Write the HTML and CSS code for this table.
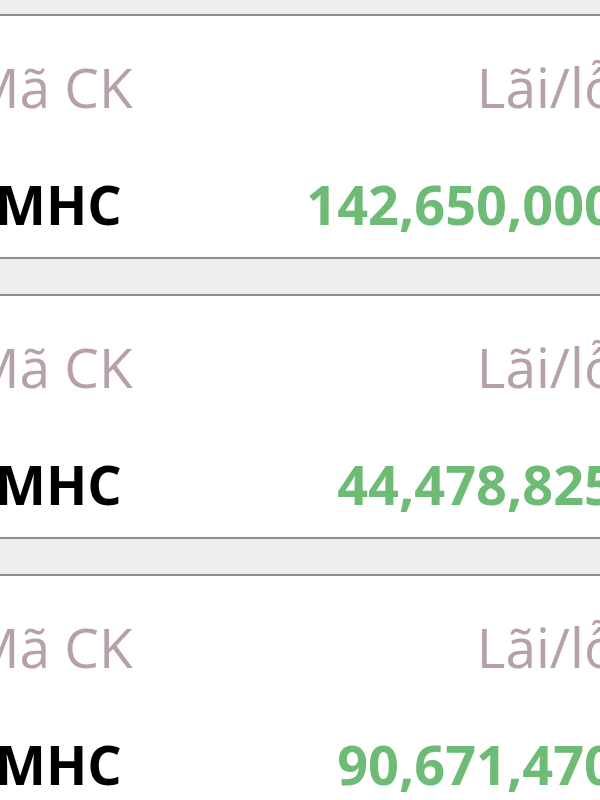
FILE: index.html
```html
<!DOCTYPE html>
<html lang="vi">
<head>
<meta charset="utf-8">
<link rel="stylesheet" href="styles.css">
</head>
<body>
<div class="list">
  <div class="gap gap-top"></div>
  <div class="card">
    <div class="row labels"><span>Mã CK</span><span>Lãi/lỗ</span></div>
    <div class="row values"><span class="code">MHC</span><span class="pl">142,650,000</span></div>
  </div>
  <div class="gap"></div>
  <div class="card">
    <div class="row labels"><span>Mã CK</span><span>Lãi/lỗ</span></div>
    <div class="row values"><span class="code">MHC</span><span class="pl">44,478,825</span></div>
  </div>
  <div class="gap"></div>
  <div class="card">
    <div class="row labels"><span>Mã CK</span><span>Lãi/lỗ</span></div>
    <div class="row values"><span class="code">MHC</span><span class="pl">90,671,470</span></div>
  </div>
</div>
</body>
</html>
```

FILE: styles.css
```css
html, body {
  margin: 0;
  padding: 0;
  background: #ffffff;
  overflow: hidden;
  width: 600px;
  height: 800px;
}
body {
  font-family: "Open Sans", "Noto Sans", sans-serif;
}
.list {
  display: flex;
  flex-direction: column;
}
.gap {
  height: 35px;
  background: #eeeef0;
  border-top: 2px solid #8e8e8e;
  border-bottom: 2px solid #8e8e8e;
}
.gap-top {
  height: 14px;
  border-top: 0;
}
.card {
  height: 241px;
  box-sizing: border-box;
  padding-top: 31px;
  margin: 0 -18px 0 -5px;
  display: flex;
  flex-direction: column;
  gap: 37px;
  background: #ffffff;
}
.row {
  display: flex;
  justify-content: space-between;
  align-items: baseline;
  height: 80px;
  line-height: 80px;
  white-space: nowrap;
}
.labels {
  margin-left: -25px;
  margin-right: 1px;
  font-size: 55px;
  color: #b7a0a7;
  font-weight: 400;
}
.values {
  font-size: 54px;
  font-weight: 700;
  margin-right: 3px;
}
.code {
  color: #000000;
}
.pl {
  color: #6dbb74;
}
```
